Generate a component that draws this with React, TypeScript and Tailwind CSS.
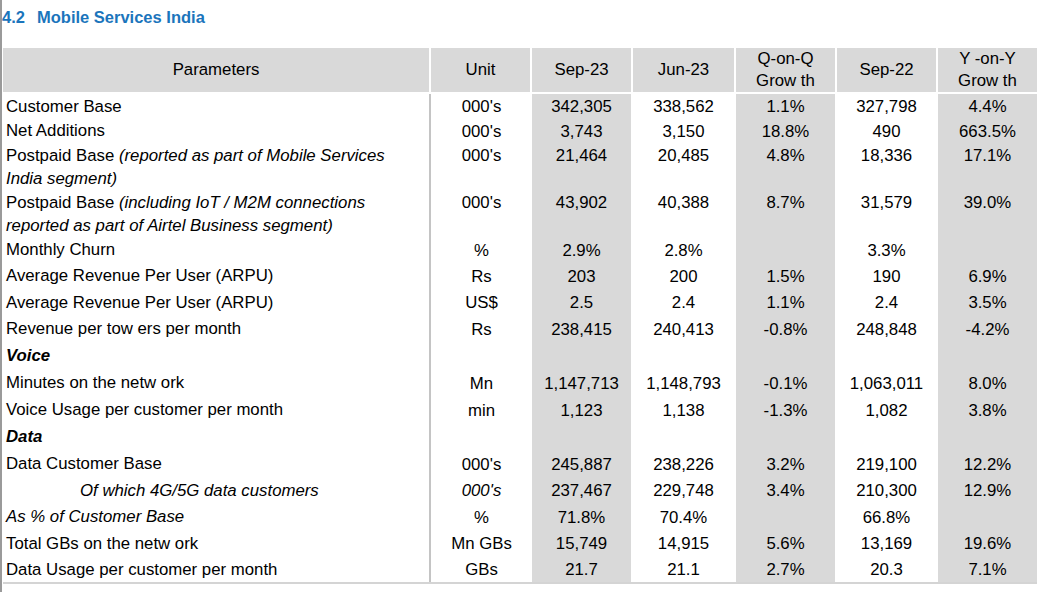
import type { ReactNode } from 'react'

type Row = {
  label: ReactNode
  unit?: string
  unitItalic?: boolean
  values?: string[]
  height: string
  section?: boolean
}

const ROWS: Row[] = [
  { label: 'Customer Base', unit: "000's", values: ['342,305', '338,562', '1.1%', '327,798', '4.4%'], height: 'h-[24px]' },
  { label: 'Net Additions', unit: "000's", values: ['3,743', '3,150', '18.8%', '490', '663.5%'], height: 'h-[25px]' },
  {
    label: (
      <>
        Postpaid Base <i>(reported as part of Mobile Services</i>
        <br />
        <i>India segment)</i>
      </>
    ),
    unit: "000's",
    values: ['21,464', '20,485', '4.8%', '18,336', '17.1%'],
    height: 'h-[47px]',
  },
  {
    label: (
      <>
        Postpaid Base <i>(including IoT / M2M connections</i>
        <br />
        <i>reported as part of Airtel Business segment)</i>
      </>
    ),
    unit: "000's",
    values: ['43,902', '40,388', '8.7%', '31,579', '39.0%'],
    height: 'h-[47px]',
  },
  { label: 'Monthly Churn', unit: '%', values: ['2.9%', '2.8%', '', '3.3%', ''], height: 'h-[25px]' },
  { label: 'Average Revenue Per User (ARPU)', unit: 'Rs', values: ['203', '200', '1.5%', '190', '6.9%'], height: 'h-[27px]' },
  { label: 'Average Revenue Per User (ARPU)', unit: 'US$', values: ['2.5', '2.4', '1.1%', '2.4', '3.5%'], height: 'h-[26px]' },
  { label: 'Revenue per tow ers per month', unit: 'Rs', values: ['238,415', '240,413', '-0.8%', '248,848', '-4.2%'], height: 'h-[27px]' },
  { label: <b><i>Voice</i></b>, height: 'h-[27px]', section: true },
  { label: 'Minutes on the netw ork', unit: 'Mn', values: ['1,147,713', '1,148,793', '-0.1%', '1,063,011', '8.0%'], height: 'h-[27px]' },
  { label: 'Voice Usage per customer per month', unit: 'min', values: ['1,123', '1,138', '-1.3%', '1,082', '3.8%'], height: 'h-[27px]' },
  { label: <b><i>Data</i></b>, height: 'h-[27px]', section: true },
  { label: 'Data Customer Base', unit: "000's", values: ['245,887', '238,226', '3.2%', '219,100', '12.2%'], height: 'h-[27px]' },
  {
    label: <i className="pl-[74px]">Of which 4G/5G data customers</i>,
    unit: "000's",
    unitItalic: true,
    values: ['237,467', '229,748', '3.4%', '210,300', '12.9%'],
    height: 'h-[26px]',
  },
  { label: <i>As % of Customer Base</i>, unit: '%', values: ['71.8%', '70.4%', '', '66.8%', ''], height: 'h-[27px]' },
  { label: 'Total GBs on the netw ork', unit: 'Mn GBs', values: ['15,749', '14,915', '5.6%', '13,169', '19.6%'], height: 'h-[26px]' },
  { label: 'Data Usage per customer per month', unit: 'GBs', values: ['21.7', '21.1', '2.7%', '20.3', '7.1%'], height: 'h-[26px]' },
]

const SHADED = [true, false, true, false, true]

function HeaderCell({ children }: { children: ReactNode }) {
  return (
    <div className="flex h-[44px] flex-col items-center justify-center bg-[#d9d9d9] text-center leading-[22px]">
      {children}
    </div>
  )
}

export default function App() {
  return (
    <div
      className="h-[592px] w-[1037px] overflow-hidden border-l-2 border-[#9a9a9a] bg-white text-[16.8px] text-black"
      style={{ fontFamily: '"Liberation Sans", Arial, sans-serif' }}
    >
      <h2 className="flex h-[34px] items-center text-[16.5px] font-bold text-[#1b75bc]">
        <span className="w-[35px]">4.2</span>
        <span>Mobile Services India</span>
      </h2>

      <div className="mt-[14px] ml-[1px]">
        <div className="grid grid-cols-[426px_99px_99px_101px_99px_99px_99px] gap-x-[2px]">
          <HeaderCell>Parameters</HeaderCell>
          <HeaderCell>Unit</HeaderCell>
          <HeaderCell>Sep-23</HeaderCell>
          <HeaderCell>Jun-23</HeaderCell>
          <HeaderCell>
            <span>Q-on-Q</span>
            <span>Grow th</span>
          </HeaderCell>
          <HeaderCell>Sep-22</HeaderCell>
          <HeaderCell>
            <span>Y -on-Y</span>
            <span>Grow th</span>
          </HeaderCell>
        </div>

        <div className="mt-[2px] border-b-2 border-[#d4d4d4]">
          {ROWS.map((row, index) => {
            const twoLine = row.height === 'h-[47px]'
            return (
              <div
                key={index}
                className={`grid grid-cols-[428px_97px_99px_101px_99px_99px_99px] gap-x-[2px] leading-[23px] ${row.height}`}
              >
                <div className="flex flex-col justify-center border-r-2 border-[#c4c4c4] pl-[3px] whitespace-nowrap">
                  <div>{row.label}</div>
                </div>
                <div className={`flex justify-center pt-[1px] ${row.unitItalic ? 'italic' : ''} ${twoLine ? 'items-start' : 'items-center'}`}>
                  {row.unit}
                </div>
                {SHADED.map((shaded, col) => (
                  <div
                    key={col}
                    className={`flex justify-center pt-[1px] ${shaded ? 'bg-[#d9d9d9]' : ''} ${twoLine ? 'items-start' : 'items-center'}`}
                  >
                    {row.values?.[col] ?? ''}
                  </div>
                ))}
              </div>
            )
          })}
        </div>
      </div>
    </div>
  )
}
